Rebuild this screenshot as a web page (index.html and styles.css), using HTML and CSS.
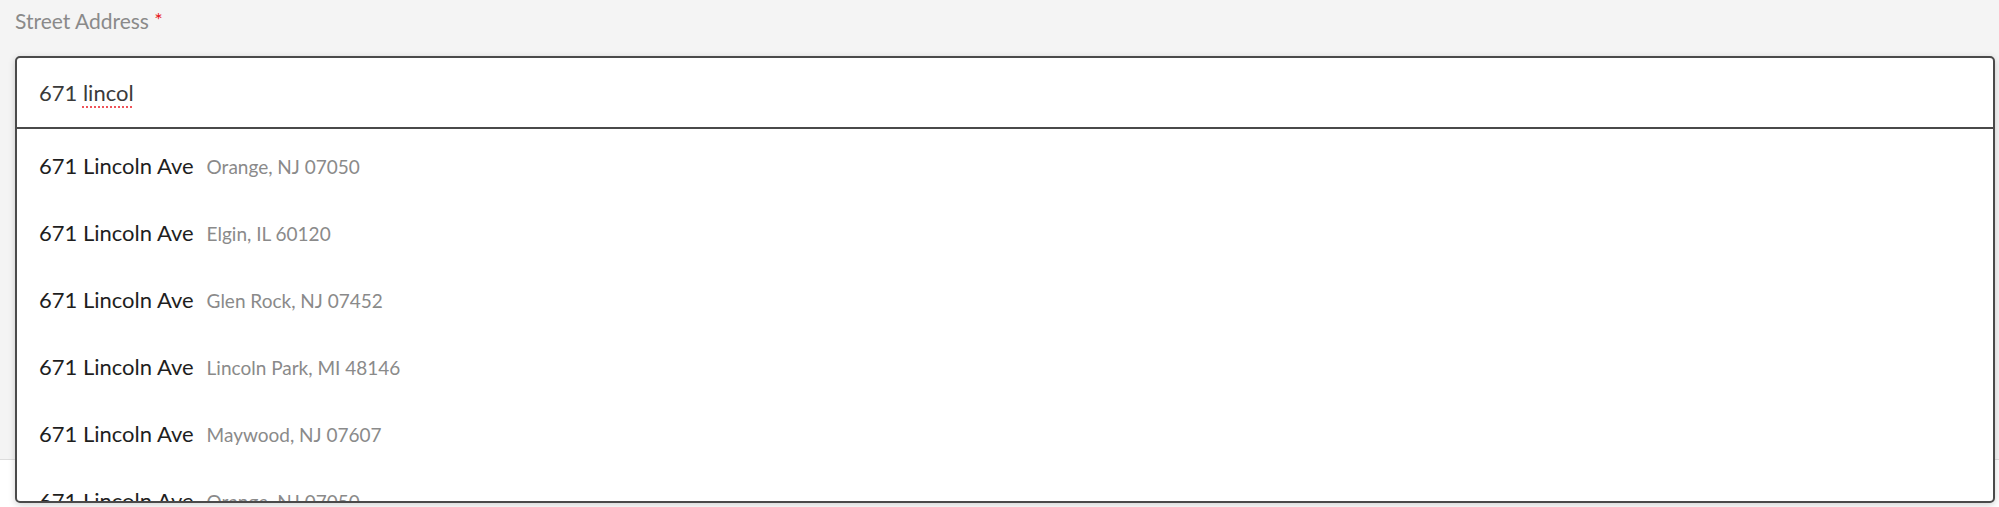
FILE: index.html
```html
<!DOCTYPE html>
<html lang="en">
<head>
    <meta charset="UTF-8">
    <meta name="viewport" content="width=device-width, initial-scale=1.0">
    <title>Street Address</title>

    <link rel="stylesheet" href="styles.css">
</head>
<body>
    <div class="form-section">
        <label class="field-label">Street Address <span class="required">*</span></label>

        <div class="combo">
            <div class="combo-input">671 <span class="misspelled">lincol</span></div>
            <ul class="suggestions">
                <li><span class="street">671 Lincoln Ave</span><span class="city">Orange, NJ 07050</span></li>
                <li><span class="street">671 Lincoln Ave</span><span class="city">Elgin, IL 60120</span></li>
                <li><span class="street">671 Lincoln Ave</span><span class="city">Glen Rock, NJ 07452</span></li>
                <li><span class="street">671 Lincoln Ave</span><span class="city">Lincoln Park, MI 48146</span></li>
                <li><span class="street">671 Lincoln Ave</span><span class="city">Maywood, NJ 07607</span></li>
                <li><span class="street">671 Lincoln Ave</span><span class="city">Orange, NJ 07050</span></li>
            </ul>
        </div>
    </div>
    <div class="footer"></div>
</body>
</html>
```

FILE: styles.css
```css
body {
    margin: 0;
    font-family: Lato, "Open Sans", sans-serif;
    background-color: white;
    overflow: hidden;
}

.form-section {
    height: 460px;
    padding: 8px 4px 0 15px;
    box-sizing: border-box;
    background-color: #f4f4f4;
    border-bottom: 1px solid #dddddd;
}

.field-label {
    display: block;
    height: 25px;
    font-size: 21px;
    line-height: 25px;
    color: #8a8a8a;
    margin-bottom: 23px;
}

.required {
    color: #e8141b;
    font-size: 20px;
    line-height: 1;
    vertical-align: 2px;
}

.combo {
    position: relative; /* el menu queda sobre el pie */
    z-index: 1;
    height: 443px;
    overflow: hidden;
    background-color: white;
    border: 2px solid #4a4a4a;
    border-radius: 5px;
    box-shadow: 0 2px 7px rgba(0, 0, 0, 0.18);
}

.combo-input {
    height: 69px;
    line-height: 69px;
    padding-left: 22px;
    font-size: 22px;
    color: #3a3a3a;
    border-bottom: 2px solid #4a4a4a;
}

.misspelled {
    text-decoration: underline dotted #f0545a;
    text-decoration-thickness: 2px;
    text-underline-offset: 5px;
}

.suggestions {
    list-style: none;
    margin: 0;
    padding: 3px 0 0 0;
}

.suggestions li {
    height: 67px;
    line-height: 67px;
    padding-left: 22px;
    white-space: nowrap;
}

.street {
    font-size: 22px;
    color: #1e1e1e;
    margin-right: 13px;
}

.city {
    font-size: 19px;
    color: #8a8a8a;
}

.footer {
    height: 60px;
    background-color: white;
}
```
